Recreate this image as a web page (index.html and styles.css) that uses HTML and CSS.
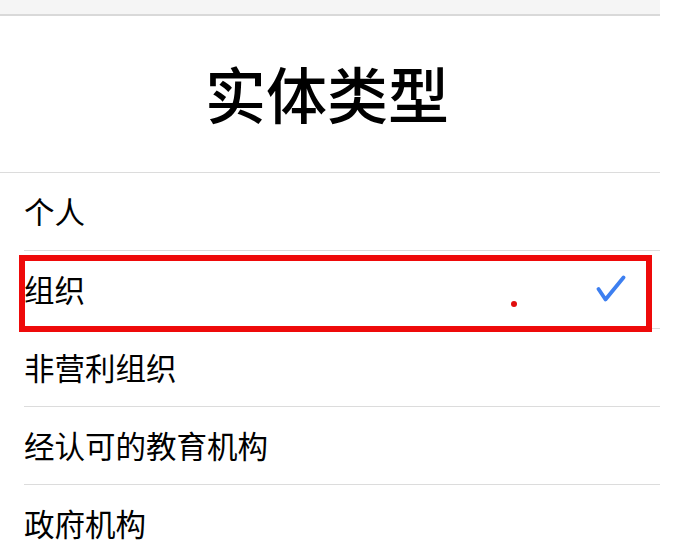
FILE: index.html
```html
<!DOCTYPE html>
<html lang="zh-CN">
<head>
<meta charset="utf-8">
<title>实体类型</title>
<link rel="stylesheet" href="styles.css">
</head>
<body>
<div class="page">
  <div class="topbar"></div>
  <header class="header">
    <h1 class="title">实体类型</h1>
  </header>
  <ul class="list">
    <li class="row"><span class="label">个人</span></li>
    <li class="row row-selected">
      <span class="label">组织</span>
      <svg class="check" width="30" height="28" viewBox="0 0 30 28" aria-hidden="true">
        <path d="M2.5 14 L9.5 24.5 L27.5 2.5" fill="none" stroke="#3d7ff0" stroke-width="3.8" stroke-linecap="round" stroke-linejoin="round"/>
      </svg>
      <span class="highlight"></span>
      <span class="dot"></span>
    </li>
    <li class="row"><span class="label">非营利组织</span></li>
    <li class="row"><span class="label">经认可的教育机构</span></li>
    <li class="row row-last"><span class="label">政府机构</span></li>
  </ul>
</div>
</body>
</html>
```

FILE: styles.css
```css
html, body {
  margin: 0;
  padding: 0;
  background: #ffffff;
}

body {
  font-family: "Noto Sans CJK SC", "Noto Sans", sans-serif;
  color: #000000;
}

.page {
  width: 660px;
}

.topbar {
  height: 14px;
  background: #f5f5f5;
  border-bottom: 2px solid #d9d9d9;
}

.header {
  height: 156px;
  display: flex;
  align-items: center;
  justify-content: center;
  border-bottom: 1px solid #dcdcdc;
}

.title {
  margin: 0 0 4px 0;
  font-size: 61px;
  font-weight: 500;
  line-height: 1;
  letter-spacing: 0;
  transform: translateX(-3px);
}

.list {
  list-style: none;
  margin: 0;
  padding: 0 0 0 24px;
}

.row {
  position: relative;
  height: 77px;
  display: flex;
  align-items: center;
  justify-content: space-between;
  border-bottom: 1px solid #dcdcdc;
}

.row-last {
  border-bottom: none;
}

.label {
  font-size: 30.5px;
  line-height: 1;
  font-weight: 400;
}

.check {
  margin-right: 34px;
  margin-top: -2px;
}

.highlight {
  position: absolute;
  left: -5px;
  top: 4px;
  width: 633px;
  height: 77px;
  box-sizing: border-box;
  border: 6px solid #ee0a0a;
  pointer-events: none;
}

.dot {
  position: absolute;
  left: 487px;
  top: 50px;
  width: 6px;
  height: 6px;
  border-radius: 50%;
  background: #e00d0d;
}
```
